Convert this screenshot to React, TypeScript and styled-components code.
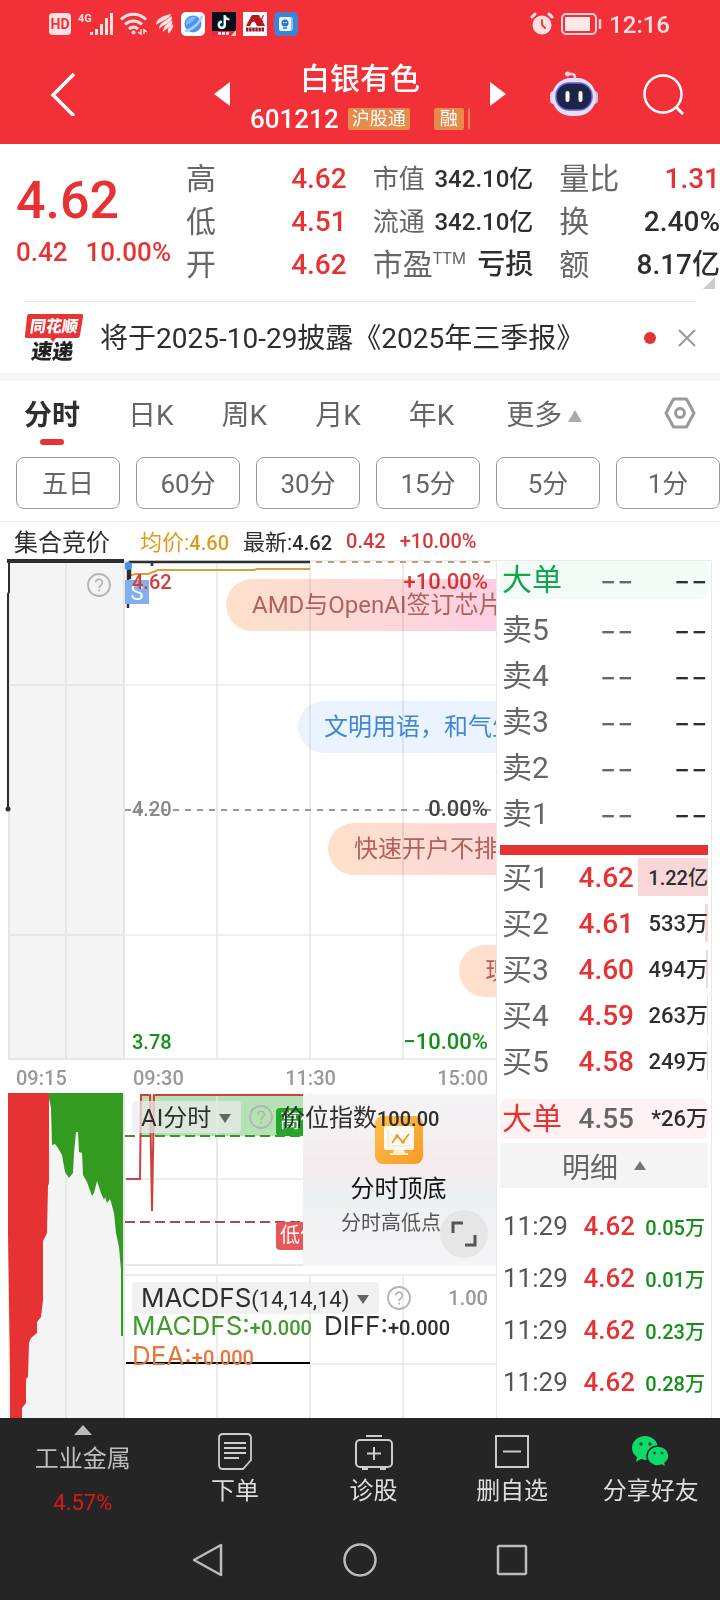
import React from "react";
import styled, { createGlobalStyle } from "styled-components";

const RED = "#e63232";
const INK = "#2e2e2e";
const GREY = "#666666";
const LINE = "#e9e9e9";

const Global = createGlobalStyle`
  * { box-sizing: border-box; }
  body { margin: 0; background: #ffffff; }
  body, button { font-family: Roboto, "Noto Sans CJK SC", sans-serif; }
  button { border: 0; padding: 0; background: none; color: inherit; cursor: pointer; white-space: nowrap; }
  svg { display: block; flex: none; }
`;

const Page = styled.div`
  display: flex;
  flex-direction: column;
  overflow: hidden;
  white-space: nowrap;
  color: ${INK};
`;

/* ---------- top bar ---------- */

const TopBar = styled.header`
  background: #f23038;
  color: #ffffff;
`;

const StatusBar = styled.div`
  display: flex;
  align-items: center;
  justify-content: space-between;
  height: 48px;
  padding: 0 50px 0 49px;
`;

const StatusGroup = styled.div<{ $gap: number }>`
  display: flex;
  align-items: center;
  gap: ${(p) => p.$gap}px;
`;

const Clock = styled.span`
  padding-top: 2px;
  font-size: 24px;
  line-height: 28px;
  font-weight: 500;
  color: #ffdfe0;
`;

const TitleBar = styled.div`
  display: grid;
  grid-template-columns: 1fr 292px 1fr;
  align-items: center;
  height: 96px;
  padding-bottom: 4px;
`;

const BackSlot = styled.div`
  display: flex;
  padding-left: 50px;
`;

const StockSwitcher = styled.div`
  display: flex;
  align-items: center;
  justify-content: space-between;
`;

const StockName = styled.div`
  display: flex;
  flex-direction: column;
  align-items: center;
  width: 220px;
  padding-top: 10px;
`;

const StockTitle = styled.h1`
  margin: 0;
  font-size: 30px;
  line-height: 40px;
  font-weight: 500;
`;

const CodeRow = styled.div`
  display: flex;
  align-items: center;
  width: 100%;
  height: 40px;
  overflow: hidden;
  font-size: 26px;
  font-weight: 500;
`;

const Badge = styled.span<{ $gap: number }>`
  flex: none;
  margin-left: ${(p) => p.$gap}px;
  padding: 0 4px;
  height: 22px;
  min-width: 30px;
  border-radius: 2px;
  background: #e58c4d;
  text-align: center;
  font-size: 18px;
  line-height: 22px;
  font-weight: 400;
`;

const HeaderTools = styled.div`
  display: flex;
  align-items: center;
  justify-content: flex-end;
  gap: 44px;
  padding-right: 36px;
`;

/* ---------- quote ---------- */

const Quote = styled.section`
  position: relative;
  display: grid;
  grid-template-columns: 144px 1fr 1fr 1fr;
  column-gap: 26px;
  padding: 13px 0 15px 16px;
`;

const LastPrice = styled.div`
  padding-top: 16px;
  color: ${RED};
  font-weight: 500;
`;

const BigPrice = styled.div`
  font-size: 52px;
  line-height: 56px;
`;

const Change = styled.div`
  display: flex;
  gap: 18px;
  padding-top: 8px;
  font-size: 26px;
  line-height: 30px;
  font-weight: 500;
`;

const Metric = styled.div`
  display: flex;
  align-items: center;
  justify-content: space-between;
  height: 43px;
`;

const MetricLabel = styled.span<{ $size: number }>`
  color: ${GREY};
  font-size: ${(p) => p.$size}px;
  line-height: 40px;
  sup { font-size: 16px; line-height: 16px; }
`;

const MetricValue = styled.span<{ $up?: boolean; $size: number }>`
  color: ${(p) => (p.$up ? RED : INK)};
  font-size: ${(p) => p.$size}px;
  line-height: 40px;
  font-weight: 500;
`;

const Corner = styled.i`
  position: absolute;
  right: 5px;
  bottom: 12px;
  border: 6px solid transparent;
  border-right-color: #cccccc;
  border-bottom-color: #cccccc;
`;

const News = styled.section`
  display: flex;
  align-items: center;
  height: 72px;
  margin: 0 24px;
  border-top: 1px solid ${LINE};
`;

const NewsLink = styled.a`
  flex: 1;
  padding: 2px 0 0 16px;
  color: ${INK};
  font-size: 28px;
  line-height: 40px;
  text-decoration: none;
`;

const Dot = styled.i`
  width: 12px;
  height: 12px;
  margin-right: 22px;
  border-radius: 50%;
  background: ${RED};
`;

/* ---------- period switching ---------- */

const Tabs = styled.nav`
  display: flex;
  align-items: flex-start;
  gap: 48px;
  padding: 14px 24px 12px;
  border-top: 8px solid #f5f5f5;
`;

const Tab = styled.button<{ $active?: boolean }>`
  display: flex;
  flex-direction: column;
  align-items: center;
  gap: 2px;
  color: ${(p) => (p.$active ? INK : GREY)};
  font-size: 28px;
  line-height: 42px;
  font-weight: ${(p) => (p.$active ? 700 : 400)};
  &::after {
    content: "";
    width: 24px;
    height: 6px;
    border-radius: 3px;
    background: ${(p) => (p.$active ? RED : "transparent")};
  }
`;

const MoreLabel = styled.span`
  display: flex;
  align-items: center;
  gap: 6px;
  padding-left: 4px;
`;

const SettingsButton = styled.button`
  margin: 2px 0 0 auto;
`;

const Periods = styled.div`
  display: grid;
  grid-template-columns: repeat(6, 1fr);
  gap: 16px;
  padding: 0 0 12px 16px;
  border-bottom: 1px solid ${LINE};
`;

const PeriodButton = styled.button`
  height: 52px;
  padding-bottom: 4px;
  border: 1px solid #999999;
  border-radius: 8px;
  color: ${GREY};
  font-size: 26px;
`;

const Legend = styled.div`
  display: flex;
  align-items: center;
  gap: 14px;
  height: 38px;
  padding: 0 0 2px 14px;
  font-size: 22px;
`;

const LegendTitle = styled.strong`
  width: 112px;
  font-size: 24px;
  font-weight: 400;
`;

const LegendItem = styled.span<{ $color: string }>`
  color: ${(p) => p.$color};
  b { font-size: 20px; font-weight: 500; }
`;

/* ---------- charts ---------- */

const Board = styled.main`
  display: flex;
  padding: 0 8px;
`;

const Charts = styled.div`
  flex: 1;
  min-width: 0;
`;

const ChartRow = styled.div`
  display: grid;
  grid-template-columns: 117fr 371fr;
`;

const Plot = styled.div<{ $height: number; $shade?: boolean }>`
  position: relative;
  height: ${(p) => p.$height}px;
  overflow: ${(p) => (p.$shade ? "visible" : "hidden")};
  background: ${(p) => (p.$shade ? "#f4f4f4" : "#ffffff")};
`;

const Drawing = styled.svg`
  width: 100%;
  height: 100%;
  overflow: visible;
`;

const Tag = styled.span<{ $top: number; $color: string; $right?: boolean }>`
  position: absolute;
  top: ${(p) => p.$top}px;
  ${(p) => (p.$right ? "right: 8px;" : "left: 7px;")}
  color: ${(p) => p.$color};
  font-size: ${(p) => (p.$right ? 22 : 20)}px;
  line-height: 24px;
  font-weight: 500;
`;

const HelpOnPlot = styled.button`
  position: absolute;
  top: 13px;
  right: 14px;
`;

const Bubble = styled.span<{ $top: number; $left: number; $blue?: boolean }>`
  position: absolute;
  top: ${(p) => p.$top}px;
  left: ${(p) => p.$left}px;
  width: 300px;
  height: 52px;
  padding-left: 26px;
  border-radius: 26px;
  mix-blend-mode: multiply;
  background: ${(p) => (p.$blue ? "#ebf3fe" : "linear-gradient(90deg, #fee0cb 0, #fdd9d8 150px, #fecfe4 270px)")};
  color: ${(p) => (p.$blue ? "#3f87d4" : "#b3605d")};
  font-size: 24px;
  line-height: 52px;
`;

const TimeAxis = styled.div`
  display: grid;
  grid-template-columns: 117fr 371fr;
  height: 33px;
  color: #999999;
  font-size: 20px;
  line-height: 36px;
  font-weight: 500;
`;

const AxisPart = styled.div`
  display: flex;
  justify-content: space-between;
  padding: 0 8px;
`;

const SellMark = styled.span`
  position: absolute;
  top: 20px;
  left: 0;
  width: 24px;
  height: 24px;
  background: #7fb0f2;
  color: #ffffff;
  text-align: center;
  font-size: 22px;
  line-height: 26px;
`;

const LowerRight = styled.div`
  display: flex;
  flex-direction: column;
  gap: 8px;
`;

const Toolbar = styled.div`
  position: absolute;
  top: 8px;
  left: 7px;
  right: 8px;
  display: flex;
  align-items: center;
  gap: 8px;
`;

const IndicatorSelect = styled.button`
  display: flex;
  align-items: center;
  gap: 8px;
  height: 32px;
  padding: 2px 10px 0 9px;
  border-radius: 4px;
  background: rgba(235, 235, 235, 0.7);
  color: ${INK};
  font-size: 24px;
  line-height: 30px;
`;

const IndicatorName = styled.span`
  font-family: Inter, sans-serif;
  font-size: 26px;
  b { font-family: Roboto, sans-serif; font-size: 22px; font-weight: 400; }
`;

const ScaleMax = styled.span`
  margin-left: auto;
  color: #999999;
  font-size: 20px;
  font-weight: 500;
`;

const LevelMark = styled.span<{ $top: number; $color: string }>`
  position: absolute;
  top: ${(p) => p.$top}px;
  left: 151px;
  width: 52px;
  height: 28px;
  padding-left: 4px;
  border-radius: 4px;
  background: ${(p) => p.$color};
  color: #ffffff;
  font-size: 20px;
  line-height: 26px;
`;

const LevelIndex = styled.span`
  position: absolute;
  top: 10px;
  left: 156px;
  font-size: 24px;
  line-height: 30px;
  b { font-size: 20px; font-weight: 500; }
`;

const Promo = styled.button`
  position: absolute;
  top: 1px;
  right: 0;
  width: 193px;
  height: 172px;
  display: flex;
  flex-direction: column;
  align-items: center;
  padding: 22px 2px 0 0;
  background: linear-gradient(180deg, #f4f3f5 0, #f4f1f3 20%, #f5eaed 40%, #ecf0f3 60%, #f2f2f5 75%, #f5f4f7 100%);
`;

const PromoTitle = styled.strong`
  padding-top: 8px;
  color: #111111;
  font-size: 24px;
  line-height: 34px;
  font-weight: 400;
`;

const PromoText = styled.span`
  width: 100%;
  padding-left: 38px;
  text-align: left;
  color: #555555;
  font-size: 20px;
  line-height: 34px;
`;

const Expand = styled.button`
  position: absolute;
  right: 8px;
  bottom: 8px;
  width: 48px;
  height: 48px;
  display: grid;
  place-items: center;
  border-radius: 50%;
  background: rgba(226, 226, 226, 0.8);
`;

const Readings = styled.div`
  position: absolute;
  top: 38px;
  left: 7px;
  right: 8px;
  display: flex;
  flex-wrap: wrap;
  column-gap: 12px;
`;

const Reading = styled.span<{ $color: string }>`
  color: ${(p) => p.$color};
  font-family: Inter, sans-serif;
  font-size: 26px;
  line-height: 27px;
  b { font-family: Roboto, sans-serif; font-size: 20px; font-weight: 500; }
`;

/* ---------- order book ---------- */

const OrderPanel = styled.aside`
  width: 216px;
  padding: 0 3px 9px;
  border: 1px solid ${LINE};
  border-bottom: 0;
`;

const BookTable = styled.table`
  display: block;
  tbody { display: block; }
  th, td { padding: 0; font-weight: 400; }
`;

const BookRow = styled.tr`
  display: grid;
  grid-template-columns: 62px 70px 1fr;
  align-items: center;
  height: 46px;
  padding-left: 2px;
`;

const BigOrderRow = styled(BookRow)<{ $bg: string; $height: number }>`
  height: ${(p) => p.$height}px;
  border-radius: 8px;
  background: ${(p) => p.$bg};
`;

const SideCell = styled.th<{ $color?: string }>`
  text-align: left;
  color: ${(p) => p.$color || GREY};
  font-size: 30px;
  line-height: 38px;
`;

const PriceCell = styled.td<{ $color: string }>`
  text-align: right;
  color: ${(p) => p.$color};
  font-size: 28px;
  line-height: 38px;
  && { font-weight: 500; }
`;

const EmptyCell = styled.td<{ $color: string }>`
  text-align: right;
  color: ${(p) => p.$color};
  font-family: Inter, sans-serif;
  font-size: 38px;
  line-height: 38px;
  && { font-weight: 300; }
`;

const VolumeCell = styled.td<{ $small?: boolean }>`
  position: relative;
  text-align: right;
  color: ${INK};
  font-size: ${(p) => (p.$small ? 20 : 22)}px;
  line-height: 40px;
  && { font-weight: 500; }
  span { position: relative; }
`;

const VolumeBar = styled.i`
  position: absolute;
  top: 0;
  right: 0;
  height: 38px;
  background: #f8d7d8;
`;

const Divider = styled.div`
  height: 10px;
  margin-top: 8px;
  background: ${RED};
`;

const DetailButton = styled.button`
  display: flex;
  align-items: center;
  justify-content: center;
  gap: 16px;
  width: 100%;
  height: 45px;
  margin: 4px 0 12px;
  background: #f4f4f4;
  color: ${GREY};
  font-size: 28px;
`;

const TradeRow = styled.tr`
  display: grid;
  grid-template-columns: 68px 64px 1fr;
  align-items: center;
  height: 52px;
  padding: 0 3px;
`;

const TradeTime = styled.th`
  text-align: left;
  color: #555555;
  font-size: 26px;
`;

const TradeCell = styled.td<{ $color: string; $small?: boolean }>`
  text-align: right;
  color: ${(p) => p.$color};
  font-size: ${(p) => (p.$small ? 20 : 26)}px;
  && { font-weight: 500; }
`;

const Gap = styled.div<{ $height: number }>`
  height: ${(p) => p.$height}px;
`;

/* ---------- bottom bars ---------- */

const Footer = styled.footer`
  background: #252525;
`;

const Actions = styled.nav`
  display: grid;
  grid-template-columns: 165fr repeat(4, 138fr);
  height: 102px;
`;

const Action = styled.button`
  display: flex;
  flex-direction: column;
  align-items: center;
  padding-top: 14px;
  color: #dddddd;
  font-size: 24px;
  line-height: 38px;
`;

const Sector = styled(Action)`
  padding-top: 7px;
  gap: 4px;
  color: #bdbdbd;
  line-height: 40px;
  b { color: #d61a1a; font-size: 22px; font-weight: 400; }
`;

const SystemNav = styled.div`
  display: flex;
  align-items: center;
  justify-content: center;
  gap: 118px;
  height: 80px;
`;

/* ---------- icons ---------- */

const Help = () => (
  <svg width="24" height="24" viewBox="0 0 24 24" fill="none" stroke="#b4b4b4" strokeWidth="1.8">
    <circle cx="12" cy="12" r="11" />
    <path d="M8.7 9.5a3.3 3.3 0 1 1 5.2 2.7c-1.200.8-1.900 1.300-1.900 2.800M12 16.400v2" />
  </svg>
);

const StatusIcons = () => (
  <StatusGroup $gap={7}>
    <svg width="22" height="22" viewBox="0 0 22 22">
      <rect width="22" height="22" rx="4" fill="#ffe1e2" />
      <text x="11" y="16" textAnchor="middle" fontFamily="Roboto, sans-serif" fontSize="14" fontWeight="700" fill="#f23038">HD</text>
    </svg>
    <svg width="35" height="24" viewBox="0 0 35 24" fill="#ffe1e2">
      <text x="0" y="10" fontFamily="Roboto, sans-serif" fontSize="11" fontWeight="700">4G</text>
      <path d="M12 20h3v3h-3zM17 17h3v6h-3zM22 12h3v11h-3zM27 6h3v17h-3zM32 1h3v22h-3z" />
    </svg>
    <svg width="27" height="24" viewBox="0 0 27 24" fill="none" stroke="#ffe1e2" strokeWidth="3">
      <path d="M1 7.500C8 .5 19 .5 26 7.500M5 12.500c5-4.800 12-4.800 17 0M9 17c3-2.500 6-2.500 9 0" />
      <circle cx="13.500" cy="20.500" r="2" fill="#ffe1e2" stroke="none" />
      <path d="M21 17v5l-3-2M24 22v-4l3 2" strokeWidth="1.500" />
    </svg>
    <svg width="20" height="24" viewBox="0 0 20 24" fill="#ffe1e2">
      <path d="M2 13C2 7 8 4 17 2c-1 5-8 6-15 11z" />
      <path d="M5 17c0-6 6-8 13-13 1 7-8 8-13 13z" />
      <path d="M9 20c0-6 4-8 9-12 2 6-5 8-9 12z" />
      <path d="M15 22c-3-4 0-7 4-10 1 4-2 6-4 10z" />
    </svg>
    <svg width="24" height="24" viewBox="0 0 24 24">
      <rect width="24" height="24" rx="5" fill="#fff" />
      <circle cx="12" cy="12" r="8.500" fill="#4b94f0" />
      <path d="M4 19C11 18 19 11 21 4" fill="none" stroke="#a9d0ff" strokeWidth="2.500" />
      <path d="M5 10c2-4 6-6 10-5-2 4-6 7-10 8z" fill="#82b8fa" />
    </svg>
    <svg width="24" height="24" viewBox="0 0 24 24">
      <rect width="24" height="24" fill="#0c0d18" />
      <path d="M12.500 3v9.500a3 3 0 1 1-3-3M12.500 3c.3 3 2 4 4.500 4" fill="none" stroke="#31e3e8" strokeWidth="2.400" />
      <path d="M13 3.500V13a3 3 0 1 1-3-3M13 3.500c.3 3 2 4 4.500 4" fill="none" stroke="#fff" strokeWidth="2" />
      <path d="M0 19h24v5H0z" fill="#e0284c" />
      <path d="M6 21.500h12" stroke="#fff" strokeWidth="2.500" strokeDasharray="3 1" />
      <path d="M19 24l5-6v6z" fill="#f6dc8c" />
    </svg>
    <svg width="24" height="24" viewBox="0 0 24 24">
      <rect width="24" height="24" fill="#fff" />
      <path d="M3 14L9 3h3l6 11h-4l-3.500-7L7 14zM12 3h4l2 4 2-4h1l-2 5 3 6h-4z" fill="#b8141d" />
      <path d="M5 11c5-3 10-3 15-1" fill="none" stroke="#b8141d" strokeWidth="2" />
      <path d="M3 17.500h18" stroke="#8c1b20" strokeWidth="4" strokeDasharray="2.500 .6" />
    </svg>
    <svg width="24" height="24" viewBox="0 0 24 24">
      <rect width="24" height="24" rx="5" fill="#3e83d8" />
      <rect x="9" y="5" width="10" height="14" rx="2" fill="#8fc0f5" />
      <rect x="5" y="5" width="12" height="14" rx="2" fill="#e9f5ff" />
      <circle cx="11" cy="11" r="3.500" fill="#2f70c8" />
      <path d="M9 16h4" stroke="#2f70c8" strokeWidth="1.500" />
      <circle cx="9.800" cy="10.500" r=".8" fill="#fff" /><circle cx="12.300" cy="10.500" r=".8" fill="#fff" />
    </svg>
  </StatusGroup>
);

const PowerIcons = () => (
  <>
    <svg width="24" height="24" viewBox="0 0 24 24" fill="none" stroke="#ffe1e2" strokeWidth="3" strokeLinecap="round">
      <circle cx="12" cy="13" r="9.500" fill="#ffe1e2" stroke="none" />
      <path d="M2 5l3-3M22 5l-3-3" />
      <path d="M12 8v5l3 3" stroke="#f23038" strokeWidth="1.800" />
    </svg>
    <svg width="41" height="22" viewBox="0 0 41 22">
      <rect x="1" y="1" width="34" height="20" rx="4" fill="none" stroke="#ffd0d2" strokeWidth="2" />
      <rect x="4" y="4" width="25" height="14" rx="1" fill="#ffe9e9" />
      <path d="M39 6v10" stroke="#ffd0d2" strokeWidth="2.500" />
    </svg>
  </>
);

const Robot = () => (
  <svg width="48" height="46" viewBox="0 0 48 46">
    <path d="M17 3h5c3 0 3 2 3 6" fill="none" stroke="#ffd6e2" strokeWidth="2.500" />
    <circle cx="17.500" cy="3" r="2.500" fill="#ffd6e2" />
    <rect x="0" y="20" width="8" height="13" rx="4" fill="#f3cfe8" />
    <rect x="40" y="20" width="8" height="13" rx="4" fill="#c9bdf5" />
    <rect x="2" y="7" width="44" height="38" rx="19" fill="#e4e0fb" />
    <rect x="6" y="12" width="36" height="27" rx="13" fill="#1c2547" stroke="#6a63d6" strokeWidth="1.500" />
    <path d="M17.500 22v7M30.500 22v7" stroke="#fff" strokeWidth="4" strokeLinecap="round" />
  </svg>
);

const FlashLogo = () => (
  <svg width="60" height="50" viewBox="0 0 60 50">
    <path d="M5 1h52q3 0 2 3l-3 18q0 3-3 3H32l-3 4-3-4H3q-3 0-2-3L3 4q0-3 2-3z" fill="#e43539" />
    <g transform="skewX(-8)" fontFamily="'Noto Sans CJK SC', sans-serif" fontWeight="900" textAnchor="middle">
      <text x="32" y="19" fontSize="16" fill="#fff">同花顺</text>
      <text x="34" y="46" fontSize="21" fill="#222">速递</text>
    </g>
  </svg>
);

const MonitorIcon = () => (
  <svg width="48" height="48" viewBox="0 0 48 48">
    <defs>
      <linearGradient id="amber" x1="0" y1="0" x2="1" y2="1">
        <stop offset="0" stopColor="#ffc04d" /><stop offset="1" stopColor="#f79a25" />
      </linearGradient>
    </defs>
    <rect width="48" height="48" rx="8" fill="url(#amber)" />
    <rect x="9" y="10" width="30" height="24" rx="2" fill="#fffaf0" />
    <path d="M19 34h10l1 3h3v2H15v-2h3z" fill="#fff0d0" />
    <path d="M13 14v16h23" fill="none" stroke="#f1dfc0" strokeWidth="1" />
    <path d="M17 27l5-7 6 6 6-8" fill="none" stroke="#e69a2c" strokeWidth="1.800" />
    <circle cx="22" cy="20" r="1.800" fill="#e69a2c" /><circle cx="28" cy="26" r="1.800" fill="#e69a2c" />
  </svg>
);

const WeChat = () => (
  <svg width="38" height="40" viewBox="0 0 38 40" fill="#0fd96b">
    <path d="M13 4C6 4 0 9 0 16c0 4 2 7 5 9l-1 5 5-3 4 1c7 0 13-5 13-12S20 4 13 4z" />
    <path d="M26 14c-6.500 0-11 4.500-11 10s4.500 10 11 10l4-1 4 3-1-5c3-2 4-4 4-7 0-5.500-4.500-10-11-10z" stroke="#252525" strokeWidth="1.500" />
    <g fill="#1a5a38"><circle cx="9" cy="12" r="1.800" /><circle cx="18" cy="12" r="1.800" /><circle cx="22.500" cy="21" r="1.500" /><circle cx="30" cy="21" r="1.500" /></g>
  </svg>
);

/* ---------- data ---------- */

type MetricData = { label: string; value: string; up?: boolean; compact?: boolean };

const metrics: MetricData[][] = [
  [{ label: "高", value: "4.62", up: true }, { label: "低", value: "4.51", up: true }, { label: "开", value: "4.62", up: true }],
  [{ label: "市值", value: "342.10亿", compact: true }, { label: "流通", value: "342.10亿", compact: true }, { label: "市盈", value: "亏损" }],
  [{ label: "量比", value: "1.31", up: true }, { label: "换", value: "2.40%" }, { label: "额", value: "8.17亿" }],
];

const bids = [
  { side: "买1", price: "4.62", volume: "1.22亿", bar: 70 },
  { side: "买2", price: "4.61", volume: "533万", bar: 3 },
  { side: "买3", price: "4.60", volume: "494万", bar: 2 },
  { side: "买4", price: "4.59", volume: "263万", bar: 1 },
  { side: "买5", price: "4.58", volume: "249万", bar: 1 },
];

const trades = ["0.05万", "0.01万", "0.23万", "0.28万"];

export default function App() {
  return (
    <Page>
      <Global />
      <TopBar>
        <StatusBar>
          <StatusIcons />
          <StatusGroup $gap={7}>
            <PowerIcons />
            <Clock>12:16</Clock>
          </StatusGroup>
        </StatusBar>
        <TitleBar>
          <BackSlot>
            <button aria-label="返回">
              <svg width="26" height="44" viewBox="0 0 26 44" fill="none" stroke="#fff" strokeWidth="3.500"><path d="M24 2L3 23l21 21" /></svg>
            </button>
          </BackSlot>
          <StockSwitcher>
            <button aria-label="上一只"><svg width="16" height="24" fill="#fff"><path d="M16 0v24L0 12z" /></svg></button>
            <StockName>
              <StockTitle>白银有色</StockTitle>
              <CodeRow>601212<Badge $gap={9}>沪股通</Badge><Badge $gap={24}>融</Badge><Badge $gap={4} /></CodeRow>
            </StockName>
            <button aria-label="下一只"><svg width="16" height="24" fill="#fff"><path d="M0 0v24l16-12z" /></svg></button>
          </StockSwitcher>
          <HeaderTools>
            <button aria-label="智能助手"><Robot /></button>
            <button aria-label="搜索">
              <svg width="42" height="42" viewBox="0 0 42 42" fill="none" stroke="#fff" strokeWidth="2.500"><circle cx="21" cy="21" r="18.500" /><path d="M34 34l7 7" strokeWidth="3" /></svg>
            </button>
          </HeaderTools>
        </TitleBar>
      </TopBar>

      <Quote>
        <LastPrice>
          <BigPrice>4.62</BigPrice>
          <Change><span>0.42</span><span>10.00%</span></Change>
        </LastPrice>
        {metrics.map((column, c) => (
          <div key={c}>
            {column.map((m) => (
              <Metric key={m.label}>
                <MetricLabel $size={m.compact ? 26 : 30}>{m.label}{m.label === "市盈" && <sup>TTM</sup>}</MetricLabel>
                <MetricValue $up={m.up} $size={m.compact ? 24 : 28}>{m.value}</MetricValue>
              </Metric>
            ))}
          </div>
        ))}
        <Corner />
      </Quote>

      <News>
        <FlashLogo />
        <NewsLink href="#report">将于2025-10-29披露《2025年三季报》</NewsLink>
        <Dot />
        <button aria-label="关闭"><svg width="18" height="18" stroke="#999" strokeWidth="2"><path d="M1 1l16 16M17 1L1 17" /></svg></button>
      </News>

      <Tabs>
        <Tab $active>分时</Tab>
        <Tab>日K</Tab>
        <Tab>周K</Tab>
        <Tab>月K</Tab>
        <Tab>年K</Tab>
        <Tab><MoreLabel>更多<svg width="14" height="12" fill="#aaa"><path d="M7 0l7 12H0z" /></svg></MoreLabel></Tab>
        <SettingsButton aria-label="设置">
          <svg width="32" height="32" viewBox="0 0 32 32" fill="none" stroke="#999" strokeWidth="3" strokeLinejoin="round"><path d="M9.500 2h13L30 16l-7.500 14h-13L2 16z" /><circle cx="16" cy="16" r="4.500" /></svg>
        </SettingsButton>
      </Tabs>

      <Periods>
        {["五日", "60分", "30分", "15分", "5分", "1分"].map((p) => <PeriodButton key={p}>{p}</PeriodButton>)}
      </Periods>

      <Legend>
        <LegendTitle>集合竞价</LegendTitle>
        <LegendItem $color="#dc9b1e">均价:<b>4.60</b></LegendItem>
        <LegendItem $color={INK}>最新:<b>4.62</b></LegendItem>
        <LegendItem $color="#d63a3a"><b>0.42</b></LegendItem>
        <LegendItem $color="#d63a3a"><b>+10.00%</b></LegendItem>
      </Legend>

      <Board>
        <Charts>
          <ChartRow>
            <Plot $height={500} $shade>
              <Drawing viewBox="0 0 117 500" preserveAspectRatio="none" fill="none">
                <path d="M1 0v500M58 0v500M116 0v500M0 125h117M0 375h117M0 499h117" stroke="#e6e6e6" strokeWidth="2" />
                <path d="M-1 1h117" stroke={INK} strokeWidth="4" />
                <path d="M1 2v30L0 34v215" stroke={INK} strokeWidth="2" />
                <circle cx="0" cy="249" r="2.500" fill={INK} />
              </Drawing>
              <HelpOnPlot aria-label="说明"><Help /></HelpOnPlot>
            </Plot>
            <Plot $height={500}>
              <Drawing viewBox="0 0 371 500" preserveAspectRatio="none" fill="none">
                <path d="M92 0v500M185 0v500M278 0v500M0 1h371M0 499h371" stroke="#ececec" strokeWidth="2" />
                <path d="M0 125h371M0 375h371" stroke="#e0e0e0" strokeWidth="1" />
                <path d="M0 250h366" stroke="#999" strokeWidth="2" strokeDasharray="6 6" />
                <path d="M191 2h180" stroke="#b99f76" strokeWidth="2" strokeDasharray="6 6" />
                <path d="M6 15l5-1h12l10-4h96l3-1h53" stroke="#d9a035" strokeWidth="2" />
                <path d="M3 4v44M3 18h2V2h180M27 2v4" stroke={INK} strokeWidth="2.500" />
                <circle cx="3" cy="6" r="4" fill="#4a8fe8" />
              </Drawing>
              <SellMark>S</SellMark>
              <Tag $top={10} $color="#d63a3a">4.62</Tag>
              <Tag $top={10} $color="#d63a3a" $right>+10.00%</Tag>
              <Tag $top={237} $color="#888888">4.20</Tag>
              <Tag $top={237} $color="#444444" $right>0.00%</Tag>
              <Tag $top={470} $color="#14901a">3.78</Tag>
              <Tag $top={470} $color="#14901a" $right>−10.00%</Tag>
              <Bubble $top={19} $left={101}>AMD与OpenAI签订芯片</Bubble>
              <Bubble $top={141} $left={173} $blue>文明用语，和气生财</Bubble>
              <Bubble $top={263} $left={203}>快速开户不排队</Bubble>
              <Bubble $top={385} $left={334}>现</Bubble>
            </Plot>
          </ChartRow>
          <TimeAxis>
            <AxisPart><span>09:15</span></AxisPart>
            <AxisPart><span>09:30</span><span>11:30</span><span>15:00</span></AxisPart>
          </TimeAxis>
          <ChartRow>
            <Plot $height={325} $shade>
              <Drawing viewBox="0 0 117 325" preserveAspectRatio="none">
                <path d="M58 0v325M116 0v325" stroke="#e6e6e6" strokeWidth="2" />
                <path fill="#e63232" d="M0 0H41V90L40 93 39 140 35 148V207L33 224 29 229V240L23 245 21 250 20 284 18 286V310L14 315V325H2V280L0 140z" />
                <path fill="#339b1f" d="M41 0H115V243H113V177L111 154 108 140 106 120 103 109 102 106 99 110 97 104 96 107 93 100 89 88 86 100 84 103 79 89 75 82 74 60 71 59 70 39H68L66 60 65 80 61 85 57 79 54 62 50 55 47 51 44 52 43 15 41 5z" />
              </Drawing>
            </Plot>
            <LowerRight>
              <Plot $height={173}>
                <Drawing viewBox="0 0 371 173" preserveAspectRatio="none" fill="none">
                  <path d="M16 2h162v41H16z" fill="#b5e2b5" />
                  <path d="M92 0v173M185 0v173M0 172h371" stroke="#e3e3e3" strokeWidth="2" strokeOpacity=".8" />
                  <path d="M0 86h371" stroke="#ddd" />
                  <path d="M0 43h178" stroke="#3f8f3a" strokeWidth="2" strokeDasharray="10 5" />
                  <path d="M0 129h178" stroke="#a84a4a" strokeWidth="2" strokeDasharray="10 5" />
                  <path d="M1 86h14l1-84h9l2 116 2-116h149" stroke="#cf4040" strokeWidth="2" />
                </Drawing>
                <LevelMark $top={15} $color="#27a52b">高价</LevelMark>
                <LevelMark $top={129} $color="#e85757">低价</LevelMark>
                <Promo>
                  <MonitorIcon />
                  <PromoTitle>分时顶底</PromoTitle>
                  <PromoText>分时高低点</PromoText>
                </Promo>
                <Toolbar>
                  <IndicatorSelect>AI分时<svg width="12" height="9" fill="#666"><path d="M0 0h12L6 9z" /></svg></IndicatorSelect>
                  <button aria-label="说明"><Help /></button>
                </Toolbar>
                <LevelIndex>价位指数<b>100.00</b></LevelIndex>
                <Expand aria-label="展开">
                  <svg width="26" height="26" viewBox="0 0 26 26" fill="none" stroke="#555" strokeWidth="3"><path d="M2 12V2h10M24 14v10H14" /></svg>
                </Expand>
              </Plot>
              <Plot $height={144}>
                <Drawing viewBox="0 0 371 144" preserveAspectRatio="none" fill="none">
                  <path d="M92 0v144M185 0v144M278 0v144M0 1h371" stroke="#ececec" strokeWidth="2" />
                  <path d="M185 90h186" stroke="#ddd" />
                  <path d="M1 89h184" stroke="#000" strokeWidth="2" />
                </Drawing>
                <Toolbar>
                  <IndicatorSelect><IndicatorName>MACDFS<b>(14,14,14)</b></IndicatorName><svg width="12" height="9" fill="#666"><path d="M0 0h12L6 9z" /></svg></IndicatorSelect>
                  <button aria-label="说明"><Help /></button>
                  <ScaleMax>1.00</ScaleMax>
                </Toolbar>
                <Readings>
                  <Reading $color="#3f9a2b">MACDFS:<b>+0.000</b></Reading>
                  <Reading $color={INK}>DIFF:<b>+0.000</b></Reading>
                  <Reading $color="#e8743c">DEA:<b>+0.000</b></Reading>
                </Readings>
              </Plot>
            </LowerRight>
          </ChartRow>
        </Charts>

        <OrderPanel>
          <BookTable>
            <tbody>
              <BigOrderRow $bg="#f2fbf6" $height={38}>
                <SideCell $color="#12a550">大单</SideCell>
                <EmptyCell $color={GREY}>--</EmptyCell>
                <EmptyCell $color={INK}>--</EmptyCell>
              </BigOrderRow>
            </tbody>
          </BookTable>
          <Gap $height={8} />
          <BookTable>
            <tbody>
              {[5, 4, 3, 2, 1].map((n) => (
                <BookRow key={n}>
                  <SideCell>卖{n}</SideCell>
                  <EmptyCell $color={GREY}>--</EmptyCell>
                  <EmptyCell $color={INK}>--</EmptyCell>
                </BookRow>
              ))}
            </tbody>
          </BookTable>
          <Divider />
          <BookTable>
            <tbody>
              {bids.map((b) => (
                <BookRow key={b.side}>
                  <SideCell>{b.side}</SideCell>
                  <PriceCell $color={RED}>{b.price}</PriceCell>
                  <VolumeCell $small={b.volume.length > 4}><VolumeBar style={{ width: b.bar }} /><span>{b.volume}</span></VolumeCell>
                </BookRow>
              ))}
            </tbody>
          </BookTable>
          <Gap $height={14} />
          <BookTable>
            <tbody>
              <BigOrderRow $bg="#fff2f2" $height={40}>
                <SideCell $color={RED}>大单</SideCell>
                <PriceCell $color={GREY}>4.55</PriceCell>
                <VolumeCell><span>*26万</span></VolumeCell>
              </BigOrderRow>
            </tbody>
          </BookTable>
          <DetailButton>明细<svg width="12" height="9" fill="#777"><path d="M6 0l6 9H0z" /></svg></DetailButton>
          <BookTable>
            <tbody>
              {trades.map((t) => (
                <TradeRow key={t}>
                  <TradeTime>11:29</TradeTime>
                  <TradeCell $color={RED}>4.62</TradeCell>
                  <TradeCell $color="#14901a" $small>{t}</TradeCell>
                </TradeRow>
              ))}
            </tbody>
          </BookTable>
        </OrderPanel>
      </Board>

      <Footer>
        <Actions>
          <Sector><svg width="18" height="10" fill="#bbb"><path d="M9 0l9 10H0z" /></svg>工业金属<b>4.57%</b></Sector>
          <Action>
            <svg width="34" height="40" viewBox="0 0 34 40" fill="none" stroke="#ccc" strokeWidth="1.800"><path d="M5 2h24q4 0 4 4v22l-8 9H5q-4 0-4-4V6q0-4 4-4zM6 11h22M6 16h22M6 21h22M6 26h15" /></svg>
            下单
          </Action>
          <Action>
            <svg width="38" height="40" viewBox="0 0 38 40" fill="none" stroke="#ccc" strokeWidth="2"><rect x="1" y="8" width="36" height="27" rx="4" /><path d="M11 4h16M19 15v13M12 21.500h14M7 37h6M25 37h6" /></svg>
            诊股
          </Action>
          <Action>
            <svg width="34" height="40" viewBox="0 0 34 40" fill="none" stroke="#ccc" strokeWidth="2"><path d="M1 4h32v31H1zM8 19.500h18" /></svg>
            删自选
          </Action>
          <Action><WeChat />分享好友</Action>
        </Actions>
        <SystemNav>
          <button aria-label="后退"><svg width="34" height="36" viewBox="0 0 34 36" fill="none" stroke="#bbb" strokeWidth="2.500" strokeLinejoin="round"><path d="M30 3v30L3 18z" /></svg></button>
          <button aria-label="主页"><svg width="34" height="36" viewBox="0 0 34 36" fill="none" stroke="#bbb" strokeWidth="2.500"><circle cx="17" cy="18" r="15.500" /></svg></button>
          <button aria-label="最近任务"><svg width="34" height="36" viewBox="0 0 34 36" fill="none" stroke="#bbb" strokeWidth="2.500"><rect x="3" y="4" width="28" height="28" rx="1" /></svg></button>
        </SystemNav>
      </Footer>
    </Page>
  );
}
